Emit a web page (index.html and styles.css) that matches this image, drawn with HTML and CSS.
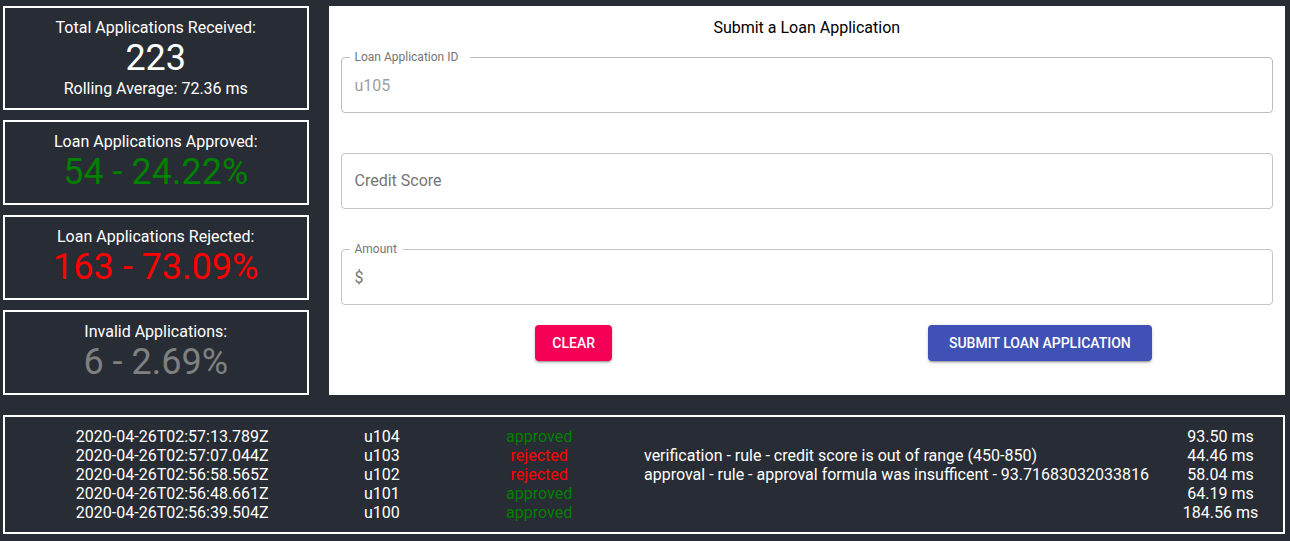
FILE: index.html
```html
<!DOCTYPE html>
<html lang="en">
<head>
<meta charset="utf-8">
<meta name="viewport" content="width=device-width, initial-scale=1">
<title>Loan Applications</title>
<link rel="stylesheet" href="styles.css">
</head>
<body>
<main class="dashboard">
  <section class="stats">
    <div class="card">
      <div>Total Applications Received:</div>
      <div class="figure">223</div>
      <div>Rolling Average: 72.36 ms</div>
    </div>
    <div class="card">
      <div>Loan Applications Approved:</div>
      <div class="figure approved">54 - 24.22%</div>
    </div>
    <div class="card">
      <div>Loan Applications Rejected:</div>
      <div class="figure rejected">163 - 73.09%</div>
    </div>
    <div class="card">
      <div>Invalid Applications:</div>
      <div class="figure invalid">6 - 2.69%</div>
    </div>
  </section>

  <form class="loan-form">
    <div class="form-title">Submit a Loan Application</div>
    <div class="fields">
      <div class="field field-disabled">
        <label class="floating floating-required" for="loan-id">Loan Application ID</label>
        <input class="field-input" id="loan-id" type="text" value="u105" disabled>
      </div>
      <div class="field">
        <label class="resting" for="credit-score">Credit Score</label>
        <input class="field-input" id="credit-score" type="text">
      </div>
      <div class="field">
        <label class="floating" for="amount">Amount</label>
        <span class="adornment">$</span>
        <input class="field-input" id="amount" type="text">
      </div>
    </div>
    <div class="actions">
      <button class="button button-clear" type="button">CLEAR</button>
      <button class="button button-submit" type="button">SUBMIT LOAN APPLICATION</button>
    </div>
  </form>

  <section class="card log">
    <table class="log-table">
      <colgroup>
        <col class="col-time"><col class="col-id"><col class="col-status"><col class="col-reason"><col class="col-duration">
      </colgroup>
      <tbody>
        <tr><td>2020-04-26T02:57:13.789Z</td><td>u104</td><td class="approved">approved</td><td class="reason"></td><td>93.50 ms</td></tr>
        <tr><td>2020-04-26T02:57:07.044Z</td><td>u103</td><td class="rejected">rejected</td><td class="reason">verification - rule - credit score is out of range (450-850)</td><td>44.46 ms</td></tr>
        <tr><td>2020-04-26T02:56:58.565Z</td><td>u102</td><td class="rejected">rejected</td><td class="reason">approval - rule - approval formula was insufficent - 93.71683032033816</td><td>58.04 ms</td></tr>
        <tr><td>2020-04-26T02:56:48.661Z</td><td>u101</td><td class="approved">approved</td><td class="reason"></td><td>64.19 ms</td></tr>
        <tr><td>2020-04-26T02:56:39.504Z</td><td>u100</td><td class="approved">approved</td><td class="reason"></td><td>184.56 ms</td></tr>
      </tbody>
    </table>
  </section>
</main>
</body>
</html>
```
FILE: styles.css
```css
* {
  box-sizing: border-box;
}

body {
  margin: 0;
  padding: 6px 5px 6px 3px;
  background: #282c34;
  color: #fff;
  font-family: Roboto, "Liberation Sans", sans-serif;
  font-size: 16px;
  line-height: 19px;
}

.dashboard {
  display: grid;
  grid-template-columns: repeat(12, minmax(0, 1fr));
  gap: 20px;
}

.stats {
  grid-column: span 3;
  display: flex;
  flex-direction: column;
  gap: 10px;
}

.card {
  padding: 10px;
  border: 2px solid #fff;
  text-align: center;
}

.figure {
  font-size: 36px;
  line-height: 42px;
}

.approved {
  color: #008000;
}

.rejected {
  color: #f00;
}

.invalid {
  color: #808080;
}

.loan-form {
  grid-column: span 9;
  padding: 12px;
  background: #fff;
  color: #000;
}

.form-title {
  text-align: center;
}

.fields {
  display: flex;
  flex-direction: column;
  gap: 40px;
  margin: 20px 0;
}

.field {
  position: relative;
  display: flex;
  align-items: center;
  padding: 0 13px;
  border: 1px solid #c4c4c4;
  border-radius: 4px;
  color: #757575;
}

.field-disabled {
  border-color: #bdbdbd;
}

.field-input {
  flex: 1;
  min-width: 0;
  padding: 18px 0 17px;
  border: 0;
  outline: 0;
  background: transparent;
  color: #000;
  font: inherit;
}

.field-input:disabled {
  color: #9e9e9e;
}

/* Labels sit over the outline or over the empty input */
.floating {
  position: absolute;
  top: -9px;
  left: 8px;
  padding: 0 6px 0 5px;
  background: #fff;
  font-size: 12px;
  line-height: 16px;
}

.floating-required {
  padding-right: 12px;
}

.resting {
  position: absolute;
  top: 17px;
  left: 13px;
  pointer-events: none;
}

.adornment {
  margin-right: 8px;
}

.actions {
  display: grid;
  grid-template-columns: 1fr 1fr;
  justify-items: center;
}

.button {
  padding: 6px 18px;
  border: 0;
  border-radius: 4px;
  box-shadow: 0 3px 1px -2px rgba(0, 0, 0, 0.2), 0 2px 2px 0 rgba(0, 0, 0, 0.14), 0 1px 5px 0 rgba(0, 0, 0, 0.12);
  color: #fff;
  font-family: inherit;
  font-size: 14px;
  font-weight: 500;
  line-height: 24px;
  cursor: pointer;
}

.button-clear {
  padding: 6px 17px;
  background: #f50057;
}

.button-submit {
  padding: 6px 21px;
  background: #3f51b5;
}

.log {
  grid-column: 1 / -1;
}

.log-table {
  width: 100%;
  table-layout: fixed;
  border-collapse: collapse;
}

.log-table td {
  padding: 0;
}

.log-table .reason {
  text-align: left;
}

.col-time {
  width: 25%;
}

.col-id,
.col-duration {
  width: calc(100% / 12);
}

.col-status {
  width: calc(100% / 6);
}
```
